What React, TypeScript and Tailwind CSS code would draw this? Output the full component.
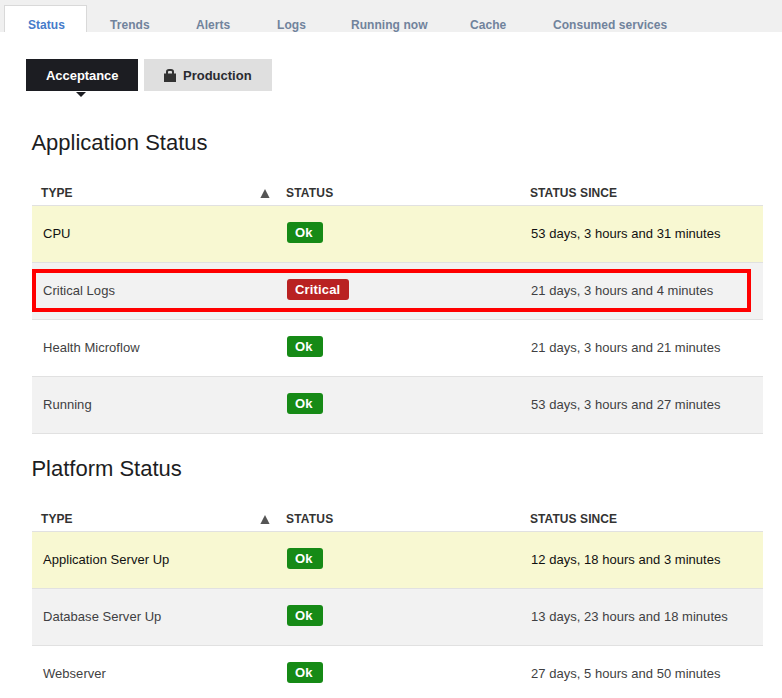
type Row = { type: string; status: 'Ok' | 'Critical'; since: string; marked?: boolean };

const tabs = [
  { label: 'Trends', width: 'w-[40px]' },
  { label: 'Alerts', width: 'w-[35px]' },
  { label: 'Logs', width: 'w-[28px]' },
  { label: 'Running now', width: 'w-[73px]' },
  { label: 'Cache', width: 'w-[37px]' },
  { label: 'Consumed services', width: 'w-[116px]' },
];

const applicationRows: Row[] = [
  { type: 'CPU', status: 'Ok', since: '53 days, 3 hours and 31 minutes' },
  { type: 'Critical Logs', status: 'Critical', since: '21 days, 3 hours and 4 minutes', marked: true },
  { type: 'Health Microflow', status: 'Ok', since: '21 days, 3 hours and 21 minutes' },
  { type: 'Running', status: 'Ok', since: '53 days, 3 hours and 27 minutes' },
];

const platformRows: Row[] = [
  { type: 'Application Server Up', status: 'Ok', since: '12 days, 18 hours and 3 minutes' },
  { type: 'Database Server Up', status: 'Ok', since: '13 days, 23 hours and 18 minutes' },
  { type: 'Webserver', status: 'Ok', since: '27 days, 5 hours and 50 minutes' },
];

const rowColors = [
  'bg-[#f8f8d2] text-[#111111]',
  'bg-[#f2f2f2] text-[#3f3f42]',
  'bg-white text-[#3f3f42]',
  'bg-[#f2f2f2] text-[#3f3f42]',
];

function StatusTable({ title, rows }: { title: string; rows: Row[] }) {
  return (
    <section className="w-[731px]">
      <h2 className="-ml-px h-[50px] pl-[0.4px] text-[22px] leading-[26px] text-[#1c1d22]">{title}</h2>
      <div className="flex h-[26px] border-b border-[#e1e1e1] text-[12px] leading-[26px] font-bold tracking-[0.08px] text-[#333333]">
        <div className="flex w-[245px] justify-between pr-[7.5px] pl-[9px]">
          <span>TYPE</span>
          <svg width="10" height="9" viewBox="0 0 10 9" className="mt-[9px]" fill="#555555">
            <path d="M5 0 9.6 9H.4z" />
          </svg>
        </div>
        <div className="w-[244px] pl-[9px] tracking-[0.2px]">STATUS</div>
        <div className="flex-1 pl-[9px]">STATUS SINCE</div>
      </div>
      {rows.map((row, i) => (
        <div
          key={row.type}
          className={`relative flex h-[57px] border-b border-[#e1e1e1] text-[13px] leading-[56px] tracking-[0.03px] ${rowColors[i]}`}
        >
          <div className="w-[245px] pl-[11px]">{row.type}</div>
          <div className="w-[244px] pt-[16px] pl-[10px]">
            <span
              className={`block h-[21px] rounded-[3px] pl-[8px] text-[13px] leading-[21px] font-bold text-white ${
                row.status === 'Ok' ? 'w-[36px] bg-[#168a16]' : 'w-[62px] tracking-[0.15px] bg-[#b92222]'
              }`}
            >
              {row.status}
            </span>
          </div>
          <div className="flex-1 pl-[10px]">{row.since}</div>
          {row.marked && (
            <div className="absolute top-[6px] left-0 h-[43px] w-[719px] border-4 border-[#ff0000]" />
          )}
        </div>
      ))}
    </section>
  );
}

export default function App() {
  return (
    <div className="h-[698px] w-[782px] overflow-hidden bg-white font-['Liberation_Sans',Arial,sans-serif]">
      <nav className="flex h-[32px] gap-[46px] overflow-hidden bg-[#f0f0f0] pt-[5px] pl-[4px] text-[12px] leading-[40px] font-bold tracking-[0.05px] whitespace-nowrap text-[#71839c]">
        <div className="-mr-[23px] h-[40px] w-[83px] border border-[#d9d9d9] bg-white pl-[23px] leading-[38px] text-[#467bca]">
          Status
        </div>
        {tabs.map((tab) => (
          <div key={tab.label} className={`h-[27px] ${tab.width}`}>
            {tab.label}
          </div>
        ))}
      </nav>
      <main className="pt-[27px]">
        <div className="flex h-[71px] gap-[6px] pl-[26px] text-[13px] leading-[34px] font-bold">
          <div className="w-[112px]">
            <div className="h-[32px] bg-[#1c1d22] pl-[20px] tracking-[-0.05px] text-white">Acceptance</div>
            <svg width="10" height="5" viewBox="0 0 10 5" className="mt-[1px] ml-[50px]" fill="#1c1d22">
              <path d="M0 0h10L5 5z" />
            </svg>
          </div>
          <div className="flex h-[32px] w-[128px] bg-[#dfdfdf] pl-[20px] text-[#2a2b30]">
            <svg width="12" height="13" viewBox="0 0 12 13" className="mt-[10px] mr-[7px]" fill="#333333">
              <path d="M0 4.5h12V13H0z" />
              <path d="M3 5V2.8Q3 1 5 1h2q2 0 2 1.8V5" fill="none" stroke="#333333" strokeWidth="2" />
            </svg>
            Production
          </div>
        </div>
        <div className="flex flex-col gap-[22px] pl-[32px]">
          <StatusTable title="Application Status" rows={applicationRows} />
          <StatusTable title="Platform Status" rows={platformRows} />
        </div>
      </main>
    </div>
  );
}
